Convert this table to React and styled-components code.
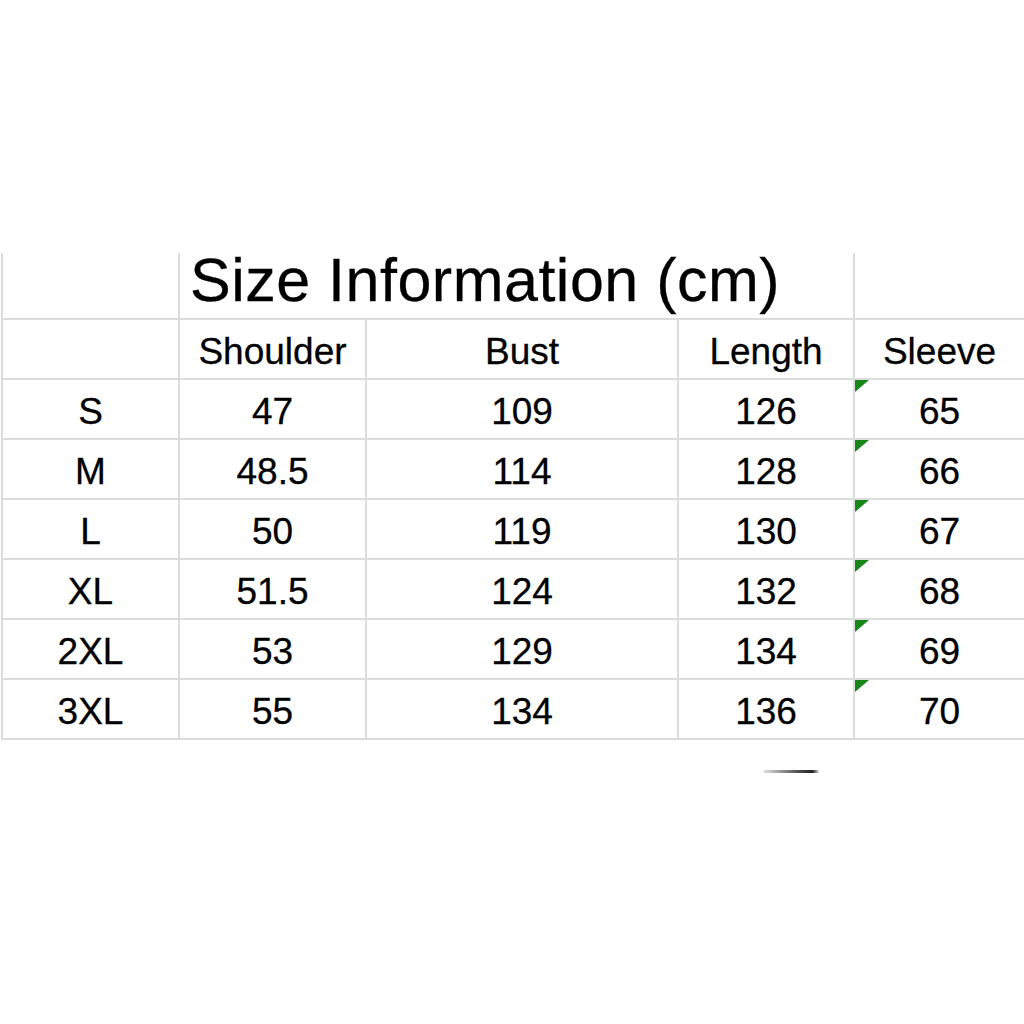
import React from "react";
import styled, { createGlobalStyle } from "styled-components";

const GlobalStyle = createGlobalStyle`
  html, body {
    margin: 0;
    padding: 0;
    background: #ffffff;
  }
  body {
    font-family: "Liberation Sans", Arial, sans-serif;
    color: #000000;
  }
`;

const Page = styled.div`
  width: 1024px;
  height: 1024px;
  padding-top: 253px;
  box-sizing: border-box;
  background: #ffffff;
`;

const Sheet = styled.div`
  display: grid;
  grid-template-columns: 177px 187px 312px 176px 171px;
  grid-auto-rows: 60px;
  grid-template-rows: 67px;
  margin-left: 1px;
`;

const Cell = styled.div`
  position: relative;
  box-sizing: border-box;
  border-left: 2px solid #dcdcdc;
  border-bottom: 2px solid #dcdcdc;
  display: flex;
  align-items: center;
  justify-content: ${(p) => (p.$left ? "flex-start" : "center")};
  grid-column: ${(p) => (p.$span ? `span ${p.$span}` : "auto")};
  font-size: 37px;
  line-height: 1;
  padding-top: 5px;
  -webkit-text-stroke: 0.3px #000;
`;

const Title = styled.span`
  font-size: 61px;
  letter-spacing: 0.5px;
  padding-left: 10px;
  padding-bottom: 16px;
`;

const Marker = styled.span`
  position: absolute;
  left: 0;
  top: 0;
  width: 14px;
  height: 12px;
  background: #17871c;
  clip-path: polygon(0 0, 100% 0, 0 100%);
`;

const Smudge = styled.div`
  margin: 30px 0 0 763px;
  width: 56px;
  height: 3px;
  border-radius: 2px;
  background: linear-gradient(90deg, rgba(120,120,120,0.2), #555 60%, #222 88%, rgba(60,60,60,0.2));
`;

const columns = ["Shoulder", "Bust", "Length", "Sleeve"];

const rows = [
  ["S", "47", "109", "126", "65"],
  ["M", "48.5", "114", "128", "66"],
  ["L", "50", "119", "130", "67"],
  ["XL", "51.5", "124", "132", "68"],
  ["2XL", "53", "129", "134", "69"],
  ["3XL", "55", "134", "136", "70"],
];

export default function App() {
  return (
    <Page>
      <GlobalStyle />
      <Sheet>
        <Cell />
        <Cell $span={3} $left>
          <Title>Size Information (cm)</Title>
        </Cell>
        <Cell />

        <Cell />
        {columns.map((c) => (
          <Cell key={c}>{c}</Cell>
        ))}

        {rows.map((r) =>
          r.map((v, i) => (
            <Cell key={r[0] + i}>
              {i === 4 && <Marker />}
              {v}
            </Cell>
          ))
        )}
      </Sheet>
      <Smudge />
    </Page>
  );
}
